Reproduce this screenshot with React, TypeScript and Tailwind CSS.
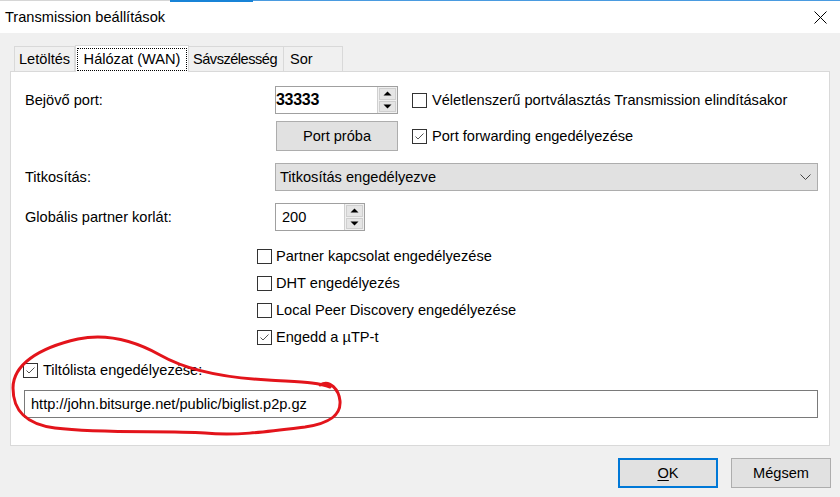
import React from "react";

function Check({ checked }: { checked?: boolean }) {
  return (
    <div className="w-[15px] h-[15px] border border-[#333333] bg-white flex items-center justify-center shrink-0">
      {checked && (
        <svg width="13" height="13" viewBox="0 0 13 13">
          <path d="M2.5 6.5 L5 9 L10.5 3.5" fill="none" stroke="#555" strokeWidth="1" />
        </svg>
      )}
    </div>
  );
}

function SpinArrows() {
  return (
    <div className="flex flex-col w-[20px] h-full border-l border-[#d0d0d0] bg-[#f0f0f0] p-[1px] gap-[1px]">
      <div className="flex-1 flex items-center justify-center bg-[#e5e5e5] border border-[#cfcfcf]">
        <svg width="9" height="5" viewBox="0 0 9 5"><path d="M0.5 4.5 L4.5 0.5 L8.5 4.5 Z" fill="#000" /></svg>
      </div>
      <div className="flex-1 flex items-center justify-center bg-[#e5e5e5] border border-[#cfcfcf]">
        <svg width="9" height="5" viewBox="0 0 9 5"><path d="M0.5 0.5 L4.5 4.5 L8.5 0.5 Z" fill="#000" /></svg>
      </div>
    </div>
  );
}

function CheckRow({ checked, label }: { checked?: boolean; label: string }) {
  return (
    <div className="h-[27px] flex items-center pl-[246px]">
      <Check checked={checked} />
      <span className="ml-[4px]">{label}</span>
    </div>
  );
}

export default function App() {
  return (
    <div className="w-[840px] h-[497px] bg-[#f0f0f0] relative overflow-hidden font-['Liberation_Sans',Arial,sans-serif] text-[14.6px] text-black leading-none">
      {/* top window border */}
      <div className="flex items-start h-[2px] bg-white">
        <div className="w-[170px] h-[1px] bg-[#d6d6d6]" />
        <div className="w-[83px] h-[2px] bg-[#1883d7]" />
        <div className="flex-1 h-[1px] bg-[#4a9be0]" />
      </div>
      {/* title bar */}
      <div className="h-[31px] bg-white flex items-center justify-between pl-[5px] pr-[13px]">
        <span>Transmission beállítások</span>
        <svg width="13" height="13" viewBox="0 0 13 13">
          <path d="M0.5 0.5 L12.5 12.5 M12.5 0.5 L0.5 12.5" stroke="#000" strokeWidth="1" />
        </svg>
      </div>

      {/* tabs */}
      <div className="pl-[14px] pt-[11px] flex items-end h-[38px]">
        <div className="h-[25px] w-[61px] pl-[4px] flex items-center border border-b-0 border-[#d9d9d9] bg-[#f0f0f0]">Letöltés</div>
        <div className="h-[27px] w-[114px] -mb-[1px] relative z-10 flex items-center justify-center border border-b-0 border-[#d9d9d9] bg-white">
          <div className="border border-dotted border-black h-[23px] w-[110px] flex items-center justify-center">Hálózat (WAN)</div>
        </div>
        <div className="h-[25px] w-[95px] pl-[4px] flex items-center border border-l-0 border-b-0 border-[#d9d9d9] bg-[#f0f0f0] tracking-[-0.5px] whitespace-nowrap overflow-hidden">Sávszélesség</div>
        <div className="h-[25px] w-[59px] pl-[6px] flex items-center border border-l-0 border-b-0 border-[#d9d9d9] bg-[#f0f0f0]">Sor</div>
      </div>

      {/* panel */}
      <div className="ml-[10px] w-[820px] h-[375px] bg-white border border-[#d9d9d9] pt-[14px] flex flex-col">
        {/* row 1 */}
        <div className="h-[28px] flex items-center">
          <div className="w-[264px] pl-[14px]">Bejövő port:</div>
          <div className="w-[123px] h-[28px] border border-[#a0a0a0] flex">
            <div className="flex-1 flex items-center font-bold text-[16px] tracking-[-0.3px]">33333</div>
            <SpinArrows />
          </div>
          <div className="ml-[14px] flex items-center">
            <Check />
            <span className="ml-[5px]">Véletlenszerű portválasztás Transmission elindításakor</span>
          </div>
        </div>
        {/* row 2 */}
        <div className="h-[30px] mt-[7px] flex items-center">
          <div className="w-[265px]" />
          <div className="w-[122px] h-[30px] bg-[#e1e1e1] border border-[#adadad] flex items-center justify-center">Port próba</div>
          <div className="ml-[14px] flex items-center">
            <Check checked />
            <span className="ml-[5px]">Port forwarding engedélyezése</span>
          </div>
        </div>
        {/* row 3 */}
        <div className="h-[28px] mt-[12px] flex items-center">
          <div className="w-[264px] pl-[14px]">Titkosítás:</div>
          <div className="w-[543px] h-[28px] bg-[#e1e1e1] border border-[#adadad] flex items-center justify-between pl-[4px] pr-[6px]">
            <span>Titkosítás engedélyezve</span>
            <svg width="11" height="7" viewBox="0 0 11 7">
              <path d="M0.5 0.5 L5.5 5.5 L10.5 0.5" fill="none" stroke="#444" strokeWidth="1" />
            </svg>
          </div>
        </div>
        {/* row 4 */}
        <div className="h-[28px] mt-[12px] flex items-center">
          <div className="w-[264px] pl-[14px]">Globális partner korlát:</div>
          <div className="w-[90px] h-[28px] border border-[#a0a0a0] flex">
            <div className="flex-1 flex items-center pl-[6px]">200</div>
            <SpinArrows />
          </div>
        </div>
        {/* checkboxes */}
        <div className="mt-[12px] flex flex-col">
          <CheckRow label="Partner kapcsolat engedélyezése" />
          <CheckRow label="DHT engedélyezés" />
          <CheckRow label="Local Peer Discovery engedélyezése" />
          <CheckRow checked label="Engedd a µTP-t" />
        </div>
        <div className="h-[27px] mt-[6px] flex items-center pl-[12px]">
          <Check checked />
          <span className="ml-[5px]">Tiltólista engedélyezése:</span>
        </div>
        <div className="mt-[6px] ml-[13px] w-[794px] h-[28px] border border-[#7a7a7a] flex items-center pl-[6px]">
          http://john.bitsurge.net/public/biglist.p2p.gz
        </div>
      </div>

      {/* buttons */}
      <div className="flex justify-end pr-[9px] mt-[12px] gap-[13px]">
        <div className="w-[100px] h-[30px] bg-[#e1e1e1] border-2 border-[#0078d7] flex items-center justify-center">
          <span className="underline underline-offset-2">O</span>K
        </div>
        <div className="w-[100px] h-[30px] bg-[#e1e1e1] border border-[#adadad] flex items-center justify-center">Mégsem</div>
      </div>

      {/* red hand-drawn annotation */}
      <svg className="absolute left-0 top-0 pointer-events-none" width="840" height="497" viewBox="0 0 840 497">
        <path
          d="M320 385 C330 379 339 390 340 401 C341 414 332 423 305 427 C265 432 235 436 205 433 C165 430 105 434 55 428 C25 424 13 410 13 388 C13 365 38 348 78 339 C108 333 135 341 160 355 C188 371 228 378 268 380 C298 382 318 382 330 387"
          fill="none"
          stroke="#e3141b"
          strokeWidth="3"
          strokeLinecap="round"
        />
      </svg>
    </div>
  );
}
